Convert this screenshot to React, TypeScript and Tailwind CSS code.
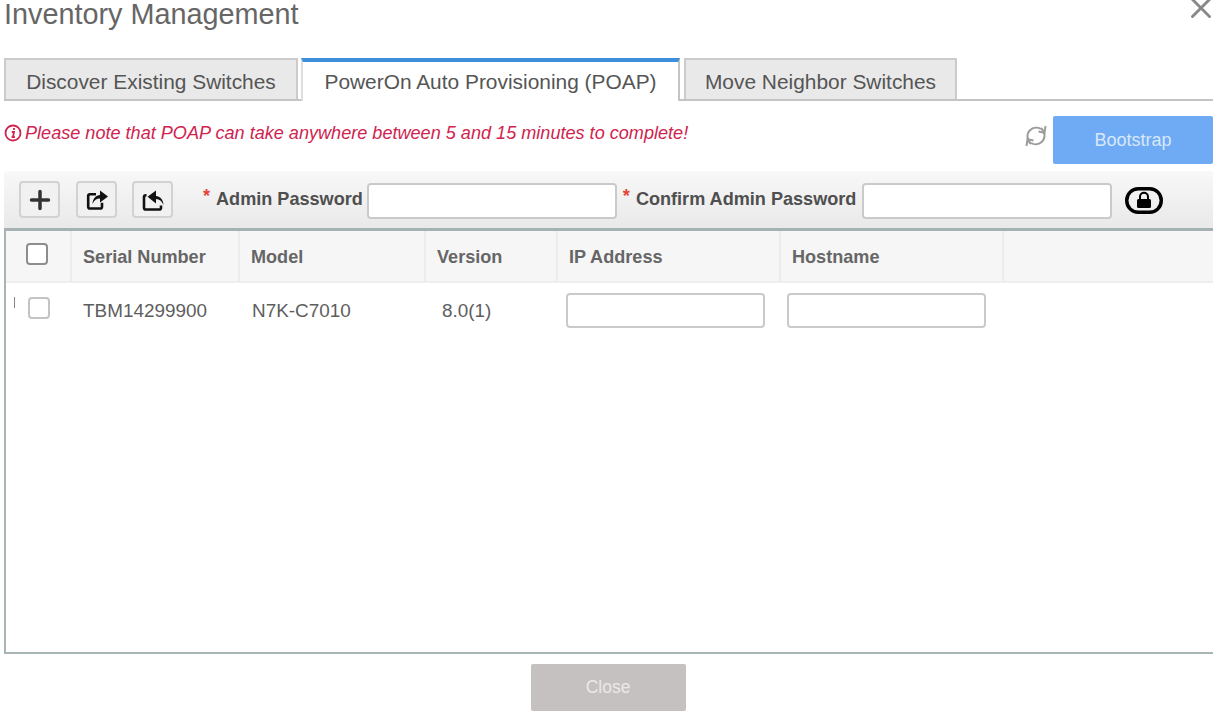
import { X } from "lucide-react";

const font = "font-['Liberation_Sans',Arial,sans-serif]";

function ExportIcon() {
  return (
    <svg width="24" height="24" viewBox="0 0 24 24" fill="none" stroke="#111" strokeWidth="2.600">
      <path d="M11 6.300H5a1.800 1.800 0 0 0-1.800 1.800v10.600A1.800 1.800 0 0 0 5 20.500h10.200a1.800 1.800 0 0 0 1.800-1.800v-4" strokeLinejoin="round" />
      <path d="M7.500 16c.3-5.500 3.500-8.700 7.500-9V2.500L23 8.500l-8 6v-4c-3.500 0-5.800 1.800-7.500 5.500z" fill="#111" stroke="none" />
    </svg>
  );
}

function ImportIcon() {
  return (
    <svg width="24" height="24" viewBox="0 0 24 24" fill="none" stroke="#111" strokeWidth="2.600">
      <path d="M5.500 7.300H4.800A1.800 1.800 0 0 0 3 9.100v10.600a1.800 1.800 0 0 0 1.800 1.800h13.400a1.800 1.800 0 0 0 1.800-1.800v-2.200" strokeLinejoin="round" />
      <path d="M22.500 17c-.3-5.500-3.500-8.700-7.500-9V2.500L6.500 8.800l8.500 6.700v-4.500c3.500 0 5.800 2 7.500 6z" fill="#111" stroke="none" />
    </svg>
  );
}

function RefreshIcon() {
  return (
    <svg width="24" height="24" viewBox="0 0 24 24" fill="none" stroke="#9c9c9c" strokeWidth="2">
      <path d="M7 20C2.500 16 2.500 9.500 6 6.300 9 3.500 13.500 3 17 5" />
      <path d="M17 4C21.500 8 21.500 14.500 18 17.700 15 20.500 10.500 21 7 19" />
      <path d="M21.500 2 20.500 8.800 14.500 7.500" />
      <path d="M2.500 22 3.500 15.200 9.500 16.500" />
    </svg>
  );
}

function LockPill() {
  return (
    <svg width="38" height="27" viewBox="0 0 38 27" fill="none">
      <rect x="1.750" y="1.750" width="34.500" height="23.500" rx="11.500" stroke="#000" strokeWidth="3.500" />
      <path d="M15 12.500V9.800a4 4 0 0 1 8 0v2.700" stroke="#000" strokeWidth="2" />
      <rect x="12" y="12" width="14" height="9" rx="1.500" fill="#000" />
    </svg>
  );
}

function Checkbox({ className }: { className: string }) {
  return <div className={`h-[22px] w-[22px] rounded-[4px] bg-white ${className}`} />;
}

function TextField({ className }: { className: string }) {
  return (
    <input
      type="text"
      className={`rounded-[4px] border-2 border-[#cacaca] bg-white outline-none ${className}`}
    />
  );
}

function ToolButton({ children }: { children: React.ReactNode }) {
  return (
    <button
      type="button"
      className="flex h-[37px] w-[41px] items-center justify-center rounded-[4px] border-2 border-[#d2d2d2] bg-[#f1f1f1]"
    >
      {children}
    </button>
  );
}

function Required() {
  return <span className="relative top-[-3px] mr-[6px] font-bold text-[#e0473a]">*</span>;
}

export default function App() {
  const headCell =
    "flex items-center border-r-2 border-[#ececec] pt-[3px] text-[18.1px] font-bold text-[#666]";

  return (
    <div className={`relative flex h-[724px] w-[1218px] flex-col overflow-hidden bg-white pl-[4px] pr-[5px] ${font}`}>
      <div className="h-[58px]">
        <h1 className="text-[28.8px] leading-[29px] font-normal text-[#666]">Inventory Management</h1>
      </div>
      <X className="absolute top-[-9px] right-[0px] text-[#888]" size={34} strokeWidth={2} />

      <div className="flex h-[43px] items-stretch border-b-2 border-[#c4c4c4] text-[20.9px] text-[#555]">
        <div className="flex w-[294px] items-center justify-center border-2 border-b-0 border-[#cbcbcb] bg-[#e9e9e9] pt-[4px]">
          Discover Existing Switches
        </div>
        <div className="relative z-10 mb-[-2px] ml-[3px] flex w-[379px] items-center justify-center border-t-[4px] border-r-2 border-l-2 border-t-[#3d8fdc] border-r-[#c4c4c4] border-l-[#dddddd] bg-white">
          PowerOn Auto Provisioning (POAP)
        </div>
        <div className="ml-[4px] flex w-[273px] items-center justify-center border-2 border-b-0 border-[#cbcbcb] bg-[#e9e9e9] pt-[4px]">
          Move Neighbor Switches
        </div>
      </div>

      <div className="flex h-[70px] items-start justify-between">
        <div className="mt-[21px] flex items-center gap-[3px] text-[18.1px] leading-[22px] text-[#d0234f] italic">
          <svg width="18" height="18" viewBox="0 0 18 18" fill="none">
            <circle cx="9" cy="9" r="7.500" stroke="#d0234f" strokeWidth="1.800" />
            <path d="M10 4v2M7.800 8h2.200l-1 5M7.500 13.200h3.500" stroke="#d0234f" strokeWidth="1.800" />
          </svg>
          Please note that POAP can take anywhere between 5 and 15 minutes to complete!
        </div>
        <div className="mt-[15px] flex items-start gap-[5px]">
          <div className="mt-[8px]">
            <RefreshIcon />
          </div>
          <button
            type="button"
            className="h-[48px] w-[160px] rounded-[2px] bg-[#6fabf4] text-[18px] text-[#d8e8fb]"
          >
            Bootstrap
          </button>
        </div>
      </div>

      <div className="flex h-[60px] items-center rounded-t-[3px] border-b-[3px] border-[#a5b1b3] bg-gradient-to-b from-[#f8f8f8] to-[#e9e9e9] pl-[15px] text-[18.1px] font-bold text-[#4f4f4f]">
        <ToolButton>
          <svg width="22" height="22" viewBox="0 0 22 22" stroke="#333" strokeWidth="3.500" strokeLinecap="round">
            <path d="M11 2.500v17M2.500 11h17" />
          </svg>
        </ToolButton>
        <div className="ml-[16px]">
          <ToolButton>
            <ExportIcon />
          </ToolButton>
        </div>
        <div className="ml-[15px]">
          <ToolButton>
            <ImportIcon />
          </ToolButton>
        </div>
        <label className="ml-[30px] flex items-center pt-[1px]">
          <Required />
          Admin Password
        </label>
        <TextField className="mt-[2px] ml-[4px] h-[36px] w-[250px]" />
        <label className="ml-[6px] flex items-center pt-[1px]">
          <Required />
          Confirm Admin Password
        </label>
        <TextField className="mt-[2px] ml-[6px] h-[36px] w-[250px]" />
        <div className="ml-[13px] mt-[1px]">
          <LockPill />
        </div>
      </div>

      <div className="flex h-[423px] flex-col border-b-2 border-l-2 border-[#a9b4b5]">
        <div className="grid h-[52px] grid-cols-[66px_168px_186px_132px_223px_223px_1fr] border-b-2 border-[#eeeeee] bg-[#f6f6f6]">
          <div className="flex items-center border-r-2 border-[#ececec] pb-[4px] pl-[20px]">
            <Checkbox className="border-2 border-[#8d8d8d]" />
          </div>
          <div className={`${headCell} pl-[11px]`}>Serial Number</div>
          <div className={`${headCell} pl-[11px]`}>Model</div>
          <div className={`${headCell} pl-[11px]`}>Version</div>
          <div className={`${headCell} pl-[11px]`}>IP Address</div>
          <div className={`${headCell} pl-[11px]`}>Hostname</div>
          <div />
        </div>
        <div className="grid h-[54px] grid-cols-[66px_168px_186px_132px_223px_223px_1fr] text-[18.9px] text-[#5e5e5e]">
          <div className="relative flex items-center pb-[4px] pl-[22px]">
            <span className="absolute top-[14px] left-[8px] h-[11px] w-px bg-[#888]" />
            <Checkbox className="border-2 border-[#c4c4c4]" />
          </div>
          <div className="flex items-center pt-[3px] pl-[11px]">TBM14299900</div>
          <div className="flex items-center pt-[3px] pl-[12px]">N7K-C7010</div>
          <div className="flex items-center pt-[3px] pl-[16px]">8.0(1)</div>
          <div className="flex items-center pl-[8px]">
            <TextField className="h-[35px] w-[199px]" />
          </div>
          <div className="flex items-center pl-[6px]">
            <TextField className="h-[35px] w-[199px]" />
          </div>
          <div />
        </div>
      </div>

      <div className="flex justify-center pt-[10px] pr-[1px]">
        <button
          type="button"
          className="h-[47px] w-[155px] rounded-[2px] bg-[#c5c1c0] text-[17.5px] text-[#ebe9e8]"
        >
          Close
        </button>
      </div>
    </div>
  );
}
